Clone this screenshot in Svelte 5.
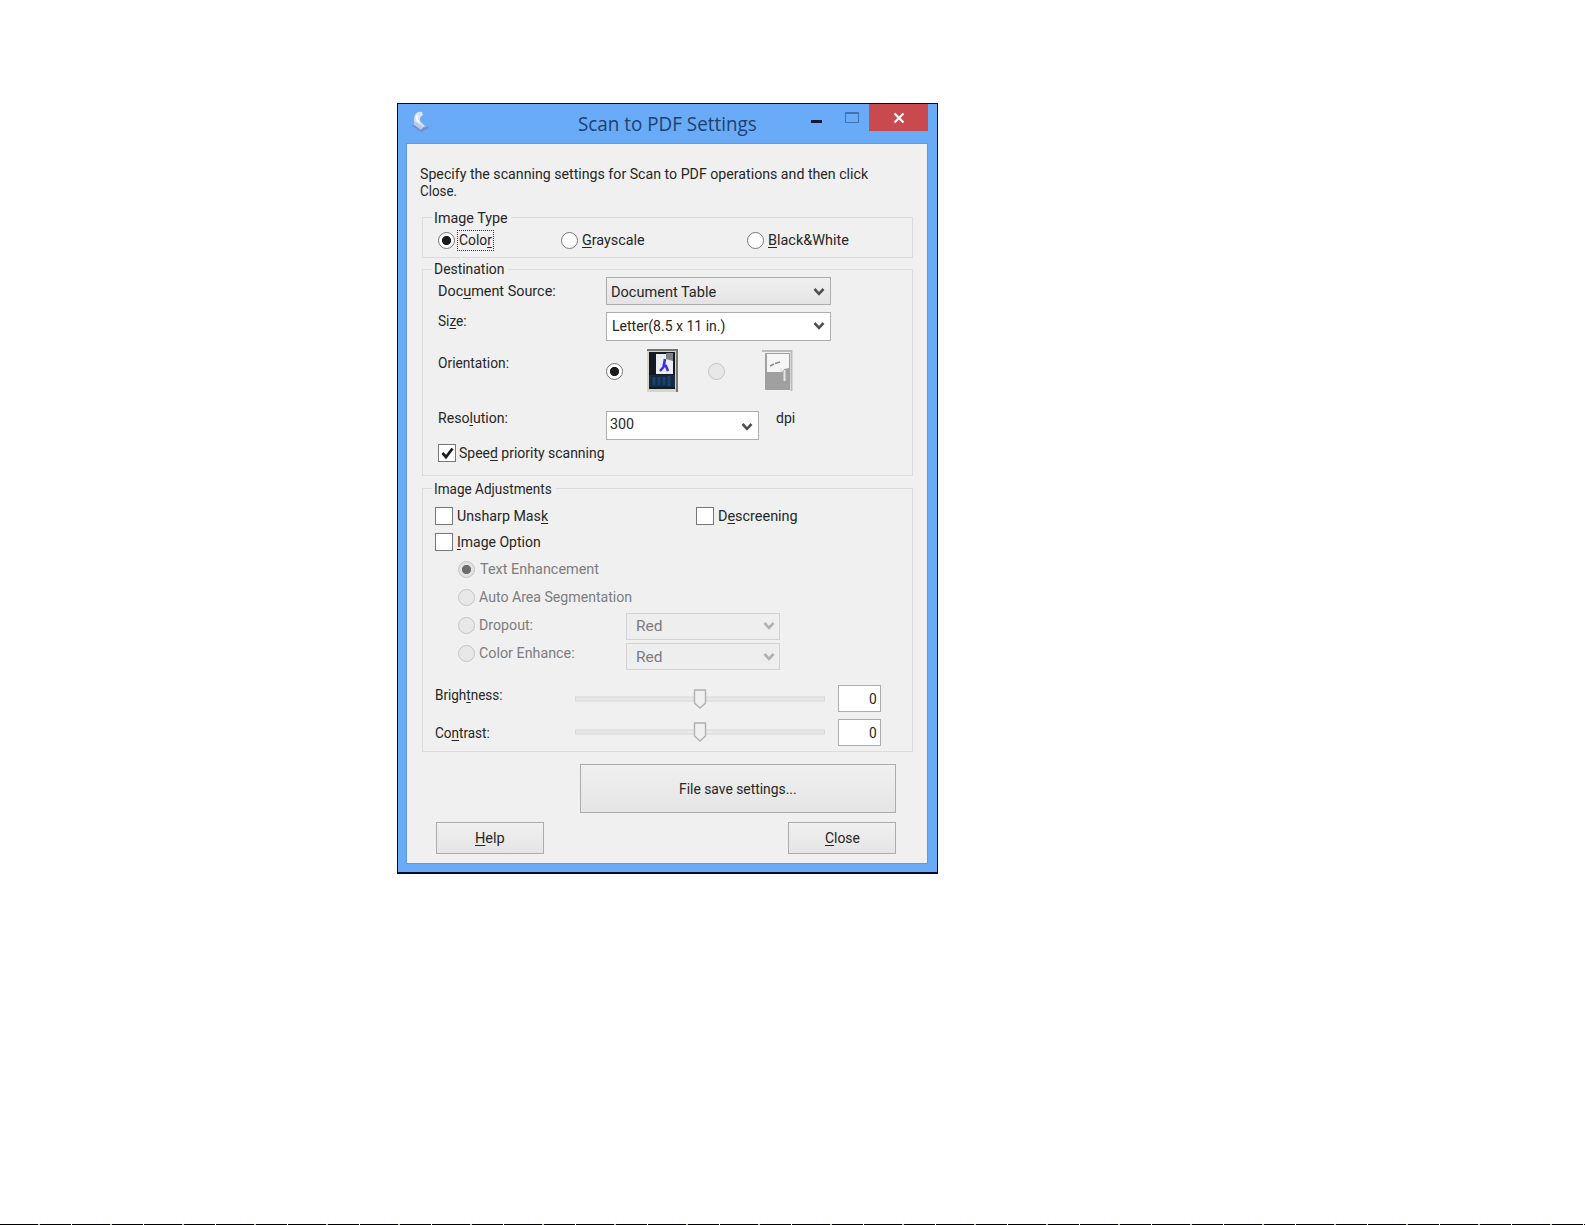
<script>
    let imageType = $state('color');
    let orientation = $state('portrait');
    let speedPriority = $state(true);

    const types = [
        { id: 'color', text: 'Colo_r', width: 33 },
        { id: 'gray', text: '_Grayscale', width: 63 },
        { id: 'bw', text: '_Black&White', width: 81 }
    ];

    const options = [
        { text: 'Text Enhancement', width: 119, indent: 5, on: true },
        { text: 'Auto Area Segmentation', width: 153, indent: 4 },
        { text: 'Dropout:', width: 54, indent: 4, value: 'Red' },
        { text: 'Color Enhance:', width: 96, indent: 4, value: 'Red' }
    ];

    const sliders = [
        { id: 'brightness', text: 'Brigh_tness:', width: 68, value: 0 },
        { id: 'contrast', text: 'Co_ntrast:', width: 55, value: 0 }
    ];

    // "_" marks the access key, the letter after it is underlined
    function split(text) {
        const i = text.indexOf('_');
        if (i < 0) return [text, '', ''];
        return [text.slice(0, i), text[i + 1], text.slice(i + 2)];
    }

    // squeeze the text to the dialog's label width
    function fit(node, width) {
        const natural = node.offsetWidth;
        if (natural) node.style.transform = `scaleX(${width / natural})`;
    }
</script>

{#snippet label(text, width)}
    {@const parts = split(text)}
    <span class="label" style="width: {width}px"><span class="squeeze" use:fit={width}>{parts[0]}{#if parts[1]}<u>{parts[1]}</u>{/if}{parts[2]}</span></span>
{/snippet}

{#snippet chevron()}
    <svg class="chevron" width="12" height="10" viewBox="0 0 12 10">
        <path d="M1.5 2 L6 6.8 L10.5 2" fill="none" stroke="currentColor" stroke-width="2.6" />
    </svg>
{/snippet}

<div class="page">
    <div class="window">
        <div class="titlebar">
            <svg class="app-icon" width="20" height="24" viewBox="0 0 20 24">
                <path d="M3 13 L14 18 L18 16 L17 19 L10 22 L1 16 Z" fill="#6f8fd0" />
                <path d="M4 5 Q6 1 11 2 L12 5 Q8 7 9 11 L14 16 L10 19 L4 14 Q2 9 4 5 Z" fill="#d9e2f8" />
                <path d="M2 14 L5 12 L12 17 L10 20 Z" fill="#b9c6ee" />
                <path d="M6 5 Q5 9 8 12" fill="none" stroke="#fff" stroke-width="2" />
            </svg>
            <div class="title">{@render label('Scan to PDF Settings', 179)}</div>
            <div class="min"></div>
            <div class="max"></div>
            <div class="close">
                <svg width="12" height="12" viewBox="0 0 12 12">
                    <path d="M1.5 1.5 L10.5 10.5 M10.5 1.5 L1.5 10.5" stroke="#fff" stroke-width="2.2" />
                </svg>
            </div>
        </div>

        <div class="content">
            <div class="intro">
                {@render label('Specify the scanning settings for Scan to PDF operations and then click', 448)}
                {@render label('Close.', 37)}
            </div>

            <div class="group image-type">
                <div class="legend">{@render label('Image Type', 74)}</div>
                <div class="row types">
                    {#each types as type}
                        <div class="choice {type.id}" onclick={() => (imageType = type.id)} role="presentation">
                            <span class="radio" class:on={imageType === type.id}></span>
                            <span class="caption" class:focus={imageType === type.id}>{@render label(type.text, type.width)}</span>
                        </div>
                    {/each}
                </div>
            </div>

            <div class="group destination">
                <div class="legend">{@render label('Destination', 70)}</div>
                <div class="row source">
                    <div class="name">{@render label('Doc_ument Source:', 118)}</div>
                    <div class="select shaded">{@render label('Document Table', 105)}{@render chevron()}</div>
                </div>
                <div class="row size">
                    <div class="name">{@render label('Si_ze:', 29)}</div>
                    <div class="select">{@render label('Letter(8.5 x 11 in.)', 113)}{@render chevron()}</div>
                </div>
                <div class="row orientation">
                    <div class="name">{@render label('Orientation:', 71)}</div>
                    <span class="radio" class:on={orientation === 'portrait'}></span>
                    <svg class="portrait" width="31" height="43" viewBox="0 0 31 43">
                        <rect width="31" height="43" fill="#d6d6c6" />
                        <path d="M0 0 H31 V43 H29 V2 H0 Z" fill="#77776d" />
                        <rect x="2" y="3" width="26" height="37" fill="#141a20" />
                        <rect x="2" y="26" width="26" height="12" fill="#132b48" />
                        <path d="M7 28 V36 M12 28 V36 M17 28 V36 M22 27 V37" stroke="#1d4066" stroke-width="3" />
                        <path d="M9 5 H20 L26 11 V25 H9 Z" fill="#ededf2" />
                        <path d="M19 4 L26 4 V12 L19 10 Z" fill="#7c8386" />
                        <path d="M13 22 L16.5 18 L18 10 M16 15 L19 17 L21 22" stroke="#3a30e0" stroke-width="2.6" fill="none" />
                    </svg>
                    <span class="radio disabled" class:on={orientation === 'landscape'}></span>
                    <svg class="landscape" width="31" height="42" viewBox="0 0 31 42">
                        <path d="M0 1 H29.5 V41" fill="none" stroke="#bcbcbc" stroke-width="2" />
                        <rect x="3" y="3" width="25" height="37" fill="#a0a0a0" />
                        <path d="M5 4 H27 V18 L22 19 L20 22 H5 Z" fill="#f6f6f6" />
                        <path d="M8 16 L12 14 M13 13.5 L18 12" stroke="#8c8c8c" stroke-width="1.6" />
                        <path d="M19 18 V22 M22.5 20 V31" stroke="#e6e6e6" stroke-width="2" />
                    </svg>
                </div>
                <div class="row resolution">
                    <div class="name">{@render label('Reso_lution:', 70)}</div>
                    <div class="select">{@render label('300', 24)}{@render chevron()}</div>
                    <div class="unit">{@render label('dpi', 19)}</div>
                </div>
                <div class="row speed" onclick={() => (speedPriority = !speedPriority)} role="presentation">
                    <span class="check">
                        {#if speedPriority}
                            <svg width="13" height="13" viewBox="0 0 13 13">
                                <path d="M1.5 6 L5 10 L11.5 1.5" fill="none" stroke="#1c1c1c" stroke-width="2.7" />
                            </svg>
                        {/if}
                    </span>
                    {@render label('Spee_d priority scanning', 146)}
                </div>
            </div>

            <div class="group adjustments">
                <div class="legend">{@render label('Image Adjustments', 118)}</div>
                <div class="row masks">
                    <div class="unsharp"><span class="check"></span>{@render label('Unsharp Mas_k', 91)}</div>
                    <span class="check"></span>{@render label('D_escreening', 80)}
                </div>
                <div class="row image-option">
                    <span class="check"></span>{@render label('_Image Option', 84)}
                </div>
                <div class="options">
                    {#each options as option}
                        <div class="row option" class:has-select={option.value}>
                            <div class="option-name">
                                <span class="radio disabled" class:on={option.on}></span>
                                <span style="margin-left: {option.indent}px">{@render label(option.text, option.width)}</span>
                            </div>
                            {#if option.value}
                                <div class="select dim">{@render label(option.value, 27)}{@render chevron()}</div>
                            {/if}
                        </div>
                    {/each}
                </div>
                {#each sliders as slider}
                    <div class="row slider {slider.id}">
                        <div class="slider-name">{@render label(slider.text, slider.width)}</div>
                        <svg class="track" width="250" height="20" viewBox="0 0 250 20">
                            <rect x="0.5" y="8" width="249" height="4" fill="#e7e7e7" stroke="#d9d9d9" />
                            <path d="M119.5 1 H130.5 V14 L125 19 L119.5 14 Z" fill="#f0f0f0" stroke="#b0b0b0" stroke-width="1.4" />
                        </svg>
                        <div class="field">{@render label(String(slider.value), 8)}</div>
                    </div>
                {/each}
            </div>

            <div class="button save">{@render label('File save settings...', 118)}</div>
            <div class="footer">
                <div class="button">{@render label('_Help', 30)}</div>
                <div class="button">{@render label('_Close', 35)}</div>
            </div>
        </div>
    </div>
    <div class="page-rule"></div>
</div>

<style>
    :global(body) {
        background: #fff;
        overflow: hidden;
    }

    .page {
        box-sizing: border-box;
        display: flex;
        flex-direction: column;
        width: 1585px;
        height: 1225px;
        padding-top: 103px;
        font-family: Roboto, 'Liberation Sans', sans-serif;
        font-size: 15.5px;
        line-height: 18px;
        color: #262626;
    }

    .page-rule {
        height: 1px;
        margin-top: auto;
        background: repeating-linear-gradient(90deg, #000 0 38px, #b8c8b8 38px 40px, #000 40px 71px, #fff 71px 72px);
    }

    .window {
        box-sizing: border-box;
        width: 541px;
        height: 771px;
        margin-left: 397px;
        border: 1px solid #040c24;
        border-bottom-width: 2px;
        background: #6aabf8;
    }

    .titlebar {
        display: flex;
        align-items: flex-start;
        height: 40px;
    }

    .app-icon {
        margin: 6px 0 0 13px;
    }

    .title {
        width: 178px;
        margin: 6px 0 0 147px;
        font-family: 'Open Sans', 'Noto Sans', sans-serif;
        font-size: 20px;
        line-height: 28px;
        color: #1d416f;
    }

    .min {
        width: 11px;
        height: 3px;
        margin: 16px 0 0 55px;
        background: #0c1c33;
    }

    .max {
        box-sizing: border-box;
        width: 14px;
        height: 11px;
        margin: 8px 0 0 23px;
        border: 1px solid #3f72b0;
        border-top-width: 2px;
    }

    .close {
        display: flex;
        align-items: center;
        justify-content: center;
        width: 59px;
        height: 27px;
        margin-left: 10px;
        background: #c84a4e;
    }

    .content {
        box-sizing: border-box;
        width: 520px;
        height: 719px;
        margin-left: 9px;
        padding: 22px 14px 0 14px;
        background: #f0f0f0;
        box-shadow: 0 0 0 1px #5f98dc;
    }

    .label {
        display: block;
        flex: none;
        white-space: nowrap;
    }

    .squeeze {
        display: inline-block;
        transform-origin: 0 50%;
    }

    u {
        text-underline-offset: 2px;
        text-decoration-thickness: 1px;
        text-decoration-skip-ink: none;
    }

    .intro {
        height: 51px;
        margin-left: -1px;
        line-height: 17px;
    }

    .group {
        box-sizing: border-box;
        width: 491px;
        margin-left: 1px;
        border: 1px solid #dcdcdc;
    }

    .legend {
        width: max-content;
        height: 18px;
        margin: -9px 0 0 9px;
        padding: 0 4px 0 2px;
        background: #f0f0f0;
    }

    .row {
        display: flex;
        align-items: center;
    }

    .image-type {
        height: 41px;
    }

    .types {
        height: 22px;
        margin-top: 2px;
        padding-left: 15px;
    }

    .choice {
        display: flex;
        align-items: center;
    }

    .choice.color {
        width: 123px;
    }

    .choice.gray {
        width: 186px;
    }

    .caption {
        margin-left: 2px;
        padding: 1px 1px;
        border: 1px dotted transparent;
        line-height: 17px;
    }

    .focus {
        border-color: #333;
    }

    .radio {
        box-sizing: border-box;
        display: block;
        flex: none;
        width: 17px;
        height: 17px;
        border: 1px solid #767676;
        border-radius: 50%;
        background: #fff;
    }

    .radio.on {
        background: radial-gradient(circle, #1c1c1c 0 4.2px, #fff 5px);
    }

    .radio.disabled {
        border-color: #c4c4c4;
        background: #e8e8e8;
    }

    .radio.disabled.on {
        background: radial-gradient(circle, #6c6c6c 0 4.2px, #e2e2e2 5px);
    }

    .check {
        box-sizing: border-box;
        display: flex;
        align-items: center;
        justify-content: center;
        flex: none;
        width: 18px;
        height: 18px;
        margin-right: 4px;
        border: 1px solid #767676;
        background: #fff;
    }

    .select {
        box-sizing: border-box;
        display: flex;
        align-items: center;
        justify-content: space-between;
        width: 225px;
        height: 29px;
        padding: 0 5px 0 5px;
        border: 1px solid #adadad;
        background: #fff;
    }

    .shaded {
        background: linear-gradient(#f0f0f0, #e4e4e4);
    }

    .chevron {
        color: #505050;
    }

    .name {
        width: 168px;
    }

    .destination {
        height: 207px;
        margin-top: 11px;
        padding-left: 15px;
    }

    .destination .legend {
        margin-top: -10px;
        margin-left: -6px;
    }

    .source {
        height: 28px;
        margin-top: -1px;
    }

    .source .select {
        height: 28px;
        padding: 1px 5px 0 4px;
    }

    .source .name {
        margin-top: -1px;
    }

    .size {
        height: 29px;
        margin-top: 7px;
    }

    .size .name {
        margin-top: -11px;
    }

    .size .select {
        padding-bottom: 1px;
    }

    .orientation {
        height: 43px;
        margin-top: 8px;
    }

    .orientation .radio {
        margin-top: 2px;
    }

    .orientation .name {
        margin-top: -16px;
    }

    .portrait {
        margin: 0 30px 0 24px;
    }

    .landscape {
        margin-left: 37px;
    }

    .resolution {
        height: 29px;
        margin-top: 19px;
    }

    .resolution .name,
    .unit {
        margin-top: -16px;
    }

    .resolution .select {
        width: 153px;
        padding-left: 3px;
    }

    .resolution .select .chevron {
        margin-top: 3px;
    }

    .resolution .select .label {
        margin-top: -3px;
    }

    .unit {
        margin-left: 17px;
    }

    .speed {
        height: 18px;
        margin-top: 4px;
    }

    .speed .check {
        margin-right: 3px;
    }

    .adjustments {
        height: 264px;
        margin-top: 12px;
    }

    .masks {
        height: 18px;
        margin-top: 9px;
        padding-left: 12px;
    }

    .unsharp {
        display: flex;
        align-items: center;
        width: 261px;
    }

    .image-option {
        height: 18px;
        margin-top: 8px;
        padding-left: 12px;
    }

    .options {
        margin: 4px 0 0 35px;
        color: #7d7d7d;
    }

    .option {
        height: 28px;
    }

    .option-name {
        display: flex;
        align-items: center;
        width: 168px;
    }

    .has-select .select {
        margin-top: 2px;
    }

    .has-select + .has-select .select {
        margin-top: 7px;
    }

    .dim {
        width: 154px;
        height: 27px;
        padding: 0 4px 0 9px;
        border-color: #d3d3d3;
        background: #eee;
    }

    .dim .chevron {
        color: #b0b0b0;
    }

    .slider {
        height: 27px;
        padding-left: 12px;
    }

    .slider-name {
        width: 140px;
    }

    .brightness {
        margin-top: 18px;
    }

    .brightness .slider-name {
        margin-top: -7px;
    }

    .contrast {
        margin-top: 7px;
    }

    .contrast .track {
        margin-top: -2px;
    }

    .field {
        box-sizing: border-box;
        display: flex;
        align-items: center;
        justify-content: flex-end;
        width: 43px;
        height: 27px;
        margin-left: 13px;
        padding-right: 3px;
        border: 1px solid #adadad;
        background: #fff;
    }

    .button {
        box-sizing: border-box;
        display: flex;
        align-items: center;
        justify-content: center;
        width: 108px;
        height: 32px;
        border: 1px solid #acacac;
        background: linear-gradient(#f0f0f0, #e5e5e5);
    }

    .save {
        width: 316px;
        height: 49px;
        margin: 12px 0 0 159px;
    }

    .footer {
        display: flex;
        justify-content: space-between;
        width: 460px;
        margin: 9px 0 0 15px;
    }
</style>
